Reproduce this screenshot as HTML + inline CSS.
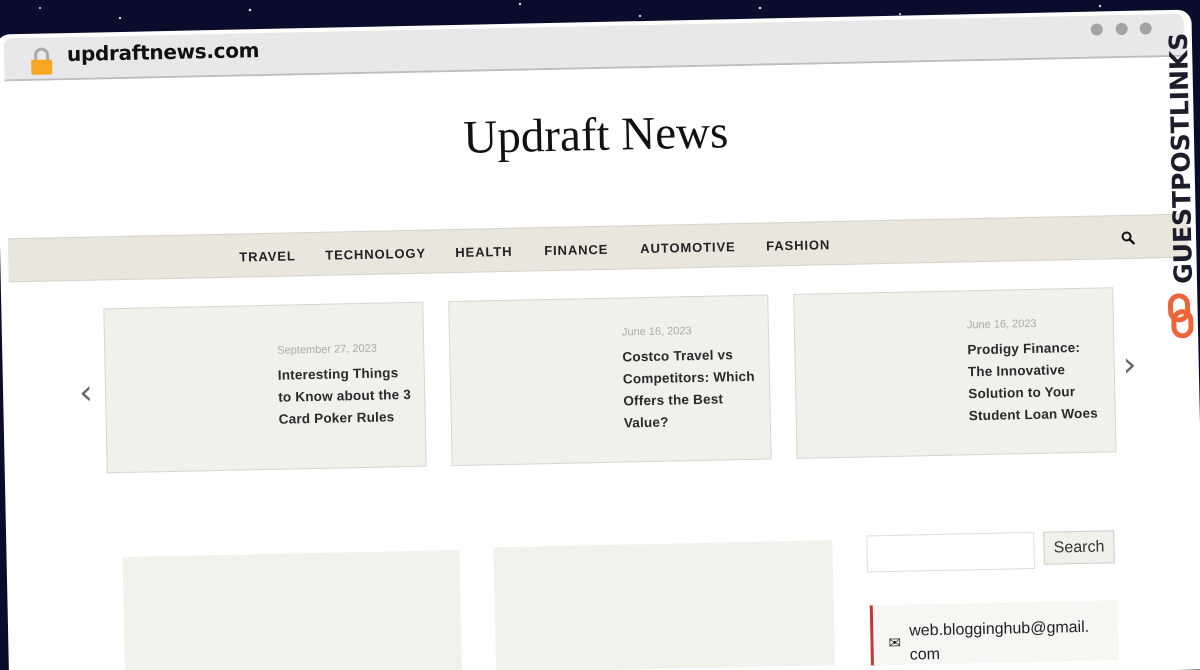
<!DOCTYPE html>
<html><head><meta charset="utf-8"><style>
*{margin:0;padding:0;box-sizing:border-box}
html{width:1200px;height:670px;overflow:hidden}
body{width:1200px;height:670px;overflow:hidden;background:#0a0c2c;position:relative;font-family:"Liberation Sans",sans-serif;
background-image:radial-gradient(circle at 250px 10px,#fff 0.8px,transparent 1.5px),radial-gradient(circle at 520px 4px,#cfd 0.8px,transparent 1.5px),radial-gradient(circle at 760px 8px,#fff 0.8px,transparent 1.5px),radial-gradient(circle at 900px 14px,#ccd 0.7px,transparent 1.4px),radial-gradient(circle at 120px 18px,#fff 0.7px,transparent 1.4px),radial-gradient(circle at 40px 8px,#ccd 0.7px,transparent 1.4px),radial-gradient(circle at 1100px 6px,#fff 0.7px,transparent 1.4px),radial-gradient(circle at 640px 16px,#fff 0.7px,transparent 1.4px)}
#f{position:absolute;left:0;top:0;width:1200px;height:670px;transform:rotate(-1.2deg);transform-origin:600px 335px}
.win{position:absolute;left:2px;top:22px;width:1196px;height:660px;background:#fff;border-radius:14px 14px 0 0}
.bar{position:absolute;left:10px;top:26px;width:1180px;height:43px;background:#e8e8ea;border-bottom:2px solid #bdbdc0;border-radius:8px 8px 0 0}
.url{position:absolute;left:73px;top:31px;font:bold 20px "DejaVu Sans",sans-serif;color:#111;letter-spacing:-0.3px}
.lock{position:absolute;left:37px;top:48px;width:21px;height:15px;background:#f5a623;border-radius:2px}
.shack{position:absolute;left:40px;top:36px;width:15px;height:16px;border:3px solid #aaa;border-bottom:none;border-radius:8px 8px 0 0}
.dot{position:absolute;top:34px;width:12px;height:12px;border-radius:50%;background:#a3a3a6}
.title{position:absolute;left:0;width:1200px;top:108px;text-align:center;font:47px "Liberation Serif",serif;color:#111}
.nav{position:absolute;left:10px;top:226px;width:1180px;height:44px;background:#e9e6dc;border-top:1px solid #d6d3c8;border-bottom:1px solid #d6d3c8}
.nav span{position:absolute;top:15px;font:bold 13px "Liberation Sans",sans-serif;letter-spacing:0.9px;color:#222}
.card{position:absolute;top:298px;width:320px;height:165px;background:#f2f0eb;border:1px solid #d8d6d0;display:flex;flex-direction:column;justify-content:center;padding-left:172px;padding-right:13px}
.card .d{font-size:11px;color:#aaa;margin-bottom:8px}
.card .t{font:bold 13.5px/22px "Liberation Sans",sans-serif;color:#2a2a2a;letter-spacing:0.2px}
.arr{position:absolute;font:34px "DejaVu Sans",sans-serif;color:#666}
.box{position:absolute;background:#f3f1ec}
.gpl{position:absolute;left:1170px;top:296px;transform:rotate(-90deg);transform-origin:0 0;font:900 25px "DejaVu Sans",sans-serif;color:#1c1c2a;letter-spacing:0px;white-space:nowrap}
</style></head><body>
<div id="f">
<div class="win"></div>
<div class="bar"></div>
<div class="shack"></div><div class="lock"></div>
<div class="url">updraftnews.com</div>
<div class="dot" style="left:1097px"></div><div class="dot" style="left:1122px"></div><div class="dot" style="left:1146px"></div>
<div class="title">Updraft News</div>
<div class="nav">
<span style="left:231px">TRAVEL</span><span style="left:317px">TECHNOLOGY</span><span style="left:447px">HEALTH</span><span style="left:536px">FINANCE</span><span style="left:632px">AUTOMOTIVE</span><span style="left:758px">FASHION</span>
<svg style="position:absolute;left:1113px;top:15px" width="14" height="14" viewBox="0 0 14 14"><circle cx="5.5" cy="5.5" r="4" fill="none" stroke="#111" stroke-width="2"/><path d="M8.5 8.5L12.5 12.5" stroke="#111" stroke-width="2.4" stroke-linecap="round"/></svg>
</div>
<div class="arr" style="left:78px;top:362px">‹</div>
<div class="arr" style="left:1122px;top:356px">›</div>
<div class="card" style="left:104px"><div class="d">September 27, 2023</div><div class="t">Interesting Things to Know about the 3 Card Poker Rules</div></div>
<div class="card" style="left:449px"><div class="d">June 16, 2023</div><div class="t">Costco Travel vs Competitors: Which Offers the Best Value?</div></div>
<div class="card" style="left:794px"><div class="d">June 16, 2023</div><div class="t">Prodigy Finance: The Innovative Solution to Your Student Loan Woes</div></div>
<div class="box" style="left:118px;top:547px;width:337px;height:125px"></div>
<div class="box" style="left:489px;top:545px;width:339px;height:125px"></div>
<div style="position:absolute;left:862px;top:541px;width:168px;height:37px;border:1px solid #ddd;background:#fff"></div>
<div style="position:absolute;left:1039px;top:541px;width:71px;height:33px;border:1px solid #ccc;background:#f2f0eb;font-size:16px;color:#333;text-align:center;line-height:31px">Search</div>
<div style="position:absolute;left:864px;top:611px;width:248px;height:60px;background:#f7f6f3;border-left:3px solid #c0393b"></div>
<div style="position:absolute;left:882px;top:640px;font-size:15px;color:#222">✉</div>
<div style="position:absolute;left:903px;top:626px;font:16px/24px 'Liberation Sans',sans-serif;color:#222">web.blogginghub@gmail.<br>com</div>
<div class="gpl">GUESTPOSTLINKS</div>
<svg style="position:absolute;left:1168px;top:305px" width="26" height="46" viewBox="0 0 26 46"><rect x="3" y="3" width="17" height="24" rx="8.5" fill="none" stroke="#f0643a" stroke-width="5"/><rect x="6" y="19" width="17" height="24" rx="8.5" fill="none" stroke="#f0643a" stroke-width="5"/></svg>
</div>
</body></html>
